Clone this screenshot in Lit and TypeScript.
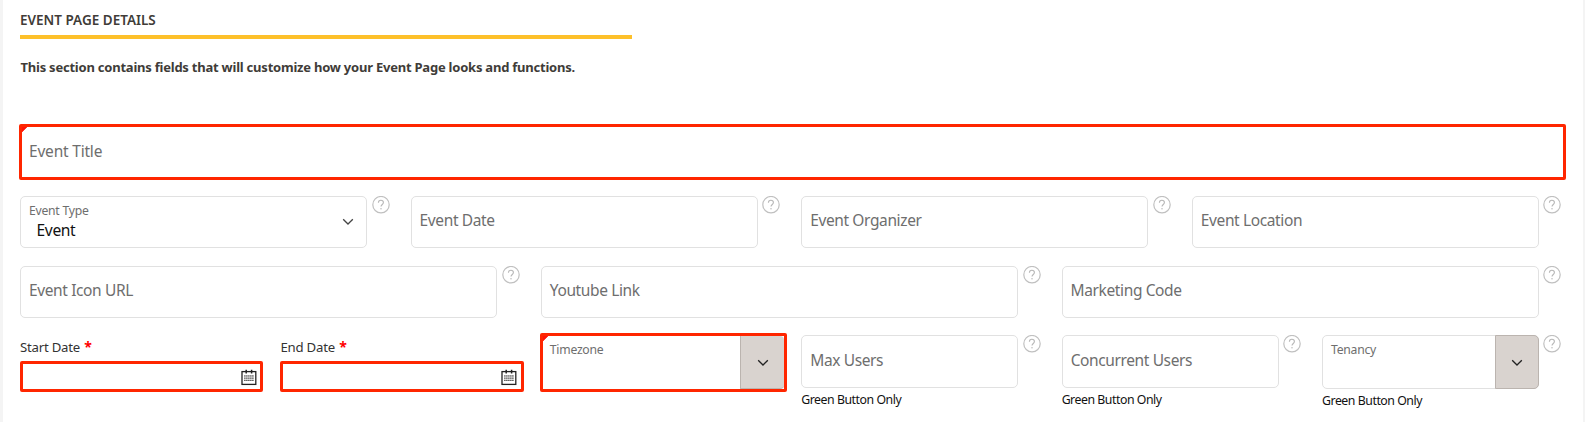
import { LitElement, html, svg, css, nothing } from "lit";
import { customElement, property } from "lit/decorators.js";

const helpIcon = html`<svg class="help" width="18" height="18" viewBox="0 0 18 18" fill="none">
  <circle cx="9" cy="8.7" r="8.2" stroke="#c0c0c0" stroke-width="1.2" />
  <path d="M6.4 6.7C6.4 5.2 7.5 4.3 8.9 4.3S11.4 5.2 11.4 6.6C11.4 8.4 9 8.6 9 10.6" stroke="#b8b8b8" stroke-width="1.1" />
  <circle cx="9" cy="12.8" r=".75" fill="#b8b8b8" />
</svg>`;

const chevron = html`<svg class="chevron" width="12" height="8" viewBox="0 0 12 8" fill="none">
  <path d="M1.2 1.3L6 6L10.8 1.3" stroke="currentColor" stroke-width="1.3" />
</svg>`;

const dots = [3.3, 5.3, 7.3, 9.3, 11.3].flatMap((x) =>
  [6.3, 8.5, 10.7].map((y) => svg`<rect x=${x} y=${y} width="1.2" height="1.3" fill="#222" />`)
);
const calendarIcon = html`<svg width="16" height="17" viewBox="0 0 16 17" fill="none">
  <rect x="1" y="2.6" width="13.8" height="12.8" stroke="#222" stroke-width="1.3" />
  <path d="M5.2 0.7V4.6M10.6 0.7V4.6" stroke="#222" stroke-width="1.5" />
  ${dots}
</svg>`;

@customElement("form-field")
export class FormField extends LitElement {
  @property() label = "";
  @property() value = "";
  @property() kind = "text";
  @property() note = "";
  @property({ type: Boolean }) help = false;
  @property({ type: Boolean }) required = false;

  static styles = css`
    :host { display: block; flex: 1 1 0; min-width: 0; }
    .line { display: flex; align-items: flex-start; }
    .box {
      box-sizing: border-box; flex: 1; min-width: 0; height: 52px;
      border: 1px solid #e1e1e1; border-radius: 5px; background: #fff;
      display: flex; justify-content: space-between;
    }
    .side { width: 43.5px; flex: none; box-sizing: border-box; padding-left: 4.5px; }
    .help { display: block; }
    .placeholder {
      padding-left: 8px; line-height: 47px; font-size: 15.5px;
      letter-spacing: -0.38px; color: #6e6e6e; white-space: nowrap;
    }
    .stack { padding: 6px 0 0 8px; }
    .small { font-size: 12.2px; line-height: 16px; letter-spacing: -0.25px; color: #6e6e6e; }
    .value { font-size: 15.6px; line-height: 23px; letter-spacing: -0.35px; padding-left: 7.5px; color: #111; }
    .select .chevron { margin: 21px 12px 0 0; color: #444; }
    .drop {
      box-sizing: border-box; width: 44px; border: 1px solid #bbb4af;
      background: #d9d3cf; display: flex; justify-content: center;
      color: #222; margin: -1px; border-radius: 0 5px 5px 0;
    }
    .drop .chevron { margin-top: 23px; }
    .combo { height: 54px; }
    .tall { height: 53px; }
    .tall .placeholder { line-height: 49px; }
    .note { font-size: 12.3px; line-height: 16px; letter-spacing: -0.46px; padding-top: 4px; color: #111; }
    .combo-note { padding-top: 3.5px; }
    .ring {
      box-sizing: border-box; border: 3px solid #ff2600; border-radius: 2px;
      background: linear-gradient(135deg, #ff1408 3.4px, #fff 4.2px);
      display: flex; justify-content: space-between;
    }
    .wide { height: 56px; margin: 0 16.4px 0 -1px; }
    .wide .placeholder { line-height: 48px; padding-left: 7px; letter-spacing: -0.2px; }
    .zone { height: 59px; margin: -2px 13.9px 0 -0.5px; }
    .zone .stack { padding: 6px 0 0 6.5px; }
    .zone .drop { margin: 0; border-radius: 0 4px 4px 0; border-width: 0 0 1px 1px; }
    .date-label { font-size: 13.2px; line-height: 18px; letter-spacing: -0.22px; padding-top: 3px; color: #333; }
    .star { display: inline-block; width: 7px; height: 7px; margin-left: 1px; vertical-align: 0; font-size: 14px; font-weight: 700; line-height: 12px; color: #f00; }
    .date { height: 31px; margin: 5px 17.2px 0 0; background: #fff; justify-content: flex-end; }
    .date svg { margin: 4.5px 3.5px 0 0; }
  `;

  private small() {
    return html`<div class="stack"><div class="small">${this.label}</div>
      ${this.value ? html`<div class="value">${this.value}</div>` : nothing}</div>`;
  }

  private control() {
    if (this.kind === "select") return html`<div class="box select">${this.small()}${chevron}</div>`;
    if (this.kind === "combo")
      return html`<div class="box combo">${this.small()}<div class="drop">${chevron}</div></div>`;
    return html`<div class="box ${this.note ? "tall" : ""}"><span class="placeholder">${this.label}</span></div>`;
  }

  render() {
    if (this.kind === "date")
      return html`<div class="date-label">${this.label} <span class="star">*</span></div>
        <div class="ring date">${calendarIcon}</div>`;
    if (this.required && this.kind === "combo")
      return html`<div class="ring zone">${this.small()}<div class="drop">${chevron}</div></div>`;
    if (this.required)
      return html`<div class="ring wide"><span class="placeholder">${this.label}</span></div>`;
    return html`<div class="line">${this.control()}<div class="side">${this.help ? helpIcon : nothing}</div></div>
      ${this.note ? html`<div class="note ${this.kind === "combo" ? "combo-note" : ""}">${this.note}</div>` : nothing}`;
  }
}

@customElement("app-root")
export class AppRoot extends LitElement {
  static styles = css`
    :host {
      display: block; box-sizing: border-box; height: 422px; overflow: hidden;
      background: #fff; border-left: 3px solid #f4f4f4; border-right: 2px solid #f4f4f4;
      padding-left: 17px; font-family: "Noto Sans", "Open Sans", sans-serif;
    }
    .content { width: 1562.4px; }
    .title {
      margin: 0; box-sizing: border-box; width: 612px; height: 39px; padding: 11px 0 0 0;
      border-bottom: 4px solid #fdc02a; font-size: 13.5px; line-height: 19px;
      font-weight: 600; letter-spacing: 0; color: #403c38;
    }
    .intro {
      margin: 0; padding: 19px 0 0 0.5px; height: 66px; font-size: 13px; line-height: 18px;
      font-weight: 700; letter-spacing: -0.225px; color: #403c38;
    }
    .row { display: flex; height: 52px; margin-bottom: 18px; }
    .first { height: 56px; margin-bottom: 16px; }
    .third { margin-bottom: 17px; }
    .last { height: 80px; margin: 0; }
  `;

  render() {
    return html`<main class="content">
      <h2 class="title">EVENT PAGE DETAILS</h2>
      <p class="intro">This section contains fields that will customize how your Event Page looks and functions.</p>
      <div class="row first"><form-field label="Event Title" required></form-field></div>
      <div class="row">
        <form-field label="Event Type" value="Event" kind="select" help></form-field>
        <form-field label="Event Date" help></form-field>
        <form-field label="Event Organizer" help></form-field>
        <form-field label="Event Location" help></form-field>
      </div>
      <div class="row third">
        <form-field label="Event Icon URL" help></form-field>
        <form-field label="Youtube Link" help></form-field>
        <form-field label="Marketing Code" help></form-field>
      </div>
      <div class="row last">
        <form-field label="Start Date" kind="date"></form-field>
        <form-field label="End Date" kind="date"></form-field>
        <form-field label="Timezone" kind="combo" required></form-field>
        <form-field label="Max Users" note="Green Button Only" help></form-field>
        <form-field label="Concurrent Users" note="Green Button Only" help></form-field>
        <form-field label="Tenancy" kind="combo" note="Green Button Only" help></form-field>
      </div>
    </main>`;
  }
}
